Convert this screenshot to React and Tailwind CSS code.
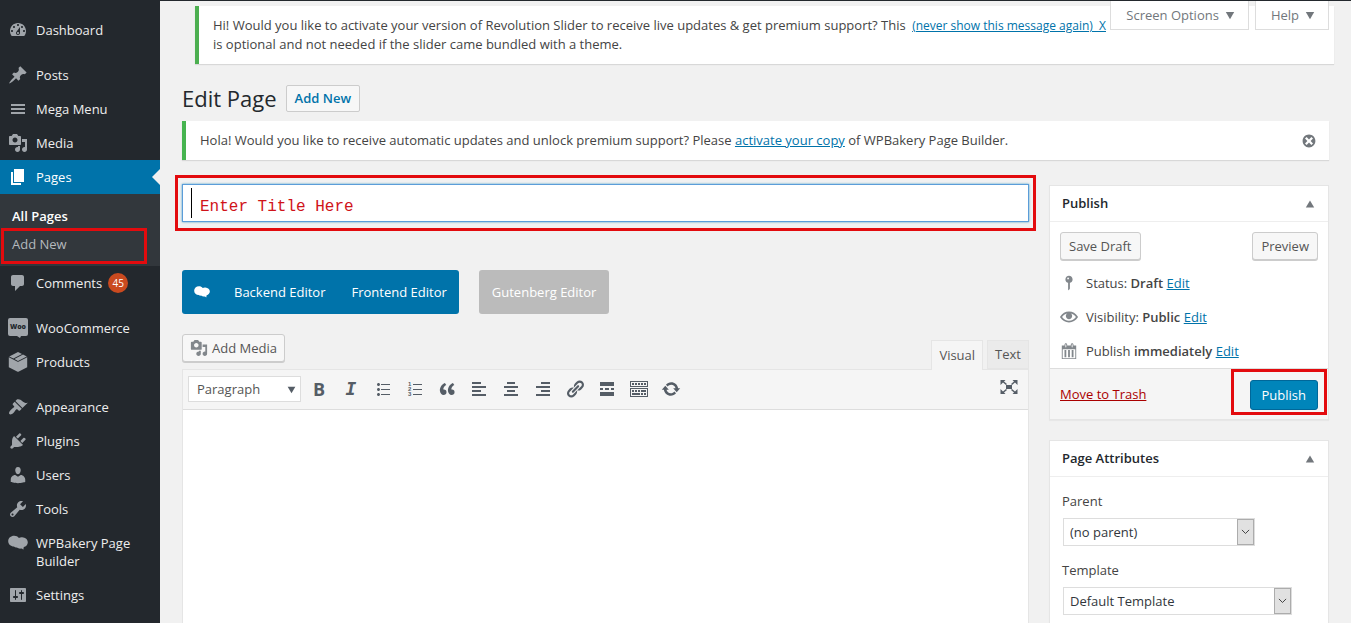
import React, { useState } from 'react';

const ICONS = {
    dashboard: 'M3.76 16h12.48c1.1-1.37 1.76-3.11 1.76-5 0-4.42-3.58-8-8-8s-8 3.58-8 8c0 1.89.66 3.63 1.76 5zM10 4c.55 0 1 .45 1 1s-.45 1-1 1-1-.45-1-1 .45-1 1-1zM6 6c.55 0 1 .45 1 1s-.45 1-1 1-1-.45-1-1 .45-1 1-1zm8 0c.55 0 1 .45 1 1s-.45 1-1 1-1-.45-1-1 .45-1 1-1zm-5.37 5.55L12 7v6c0 1.1-.9 2-2 2s-2-.9-2-2c0-.57.24-1.08.63-1.45zM4 10c.55 0 1 .45 1 1s-.45 1-1 1-1-.45-1-1 .45-1 1-1zm12 0c.55 0 1 .45 1 1s-.45 1-1 1-1-.45-1-1 .45-1 1-1zm-5 3c0-.55-.45-1-1-1s-1 .45-1 1 .45 1 1 1 1-.45 1-1z',
    post: 'M10.44 3.02l1.82-1.82 6.36 6.35-1.83 1.82c-1.05-.68-2.48-.57-3.41.36l-.75.75c-.92.93-1.04 2.35-.35 3.41l-1.83 1.82-2.41-2.41-2.8 2.79c-.42.42-3.38 2.71-3.8 2.29s1.86-3.39 2.28-3.81l2.79-2.79L4.1 9.36l1.83-1.82c1.05.69 2.48.57 3.4-.36l.75-.75c.93-.92 1.05-2.35.36-3.41z',
    menu: 'M17 7V5H3v2h14zm0 4V9H3v2h14zm0 4v-2H3v2h14z',
    media: 'M13 11V4c0-.55-.45-1-1-1h-1.67L9 1H5L3.67 3H2c-.55 0-1 .45-1 1v7c0 .55.45 1 1 1h10c.55 0 1-.45 1-1zM7 4.5c1.38 0 2.5 1.12 2.5 2.5S8.38 9.5 7 9.5 4.5 8.38 4.5 7 5.62 4.5 7 4.5zM14 6h5v10.5c0 1.38-1.12 2.5-2.5 2.5S14 17.88 14 16.5s1.12-2.5 2.5-2.5c.17 0 .34.02.5.05V9h-3V6zm-4 8.05V13h2v3.5c0 1.38-1.12 2.5-2.5 2.5S7 17.88 7 16.5 8.12 14 9.5 14c.17 0 .34.02.5.05z',
    page: 'M6 15V2h10v13H6zm-1 1h8v2H3V5h2v11z',
    comments: 'M5 2h9c1.1 0 2 .9 2 2v7c0 1.1-.9 2-2 2h-2l-5 5v-5H5c-1.1 0-2-.9-2-2V4c0-1.1.9-2 2-2z',
    products: 'M10 0l4 2-8.600 4.400L1.200 4.500zM15 2.500l3.800 2-8.800 4.500-3.600-2zM.8 5.300l8.800 4.500v10L.8 15.200zM19.200 5.300l-8.800 4.500v10l8.800-4.600z M9.600 9.800h.8v10h-.8z',
    appearance: 'M14.48 11.06L7.41 3.99l1.5-1.5c.5-.56 2.3-.47 3.51.32 1.21.8 1.43 1.28 2.91 2.1 1.18.64 2.45 1.26 4.45.85zm-.71.71L6.7 4.7 4.93 6.47c-.39.39-.39 1.02 0 1.41l1.06 1.06c.39.39.39 1.03 0 1.42-.6.6-1.43 1.11-2.21 1.69-.35.26-.7.53-1.01.84C1.43 14.23.4 16.08 1.4 17.07c.99 1 2.84-.03 4.18-1.36.31-.31.58-.66.85-1.02.57-.78 1.08-1.61 1.69-2.21.39-.39 1.02-.39 1.41 0l1.06 1.06c.39.39 1.02.39 1.41 0z',
    plugins: 'M13.11 4.36L9.87 7.6 8 5.73l3.24-3.24c.35-.34 1.05-.2 1.56.32.52.51.66 1.21.31 1.55zm-8 1.77l.91-1.12 9.01 9.01-1.19.84c-.71.71-2.63 1.16-3.82 1.16H6.14L4.9 17.26c-.59.59-1.54.59-2.12 0-.59-.58-.59-1.53 0-2.12l1.24-1.24v-3.88c0-1.13.4-3.19 1.09-3.89zm7.26 3.97l3.24-3.24c.34-.35 1.04-.21 1.55.31.52.51.66 1.21.31 1.55l-3.24 3.25z',
    users: 'M10 9.25c-2.27 0-2.73-3.44-2.73-3.44C7 4.02 7.82 2 9.97 2c2.16 0 2.98 2.02 2.71 3.81 0 0-.41 3.44-2.68 3.44zm0 2.57L12.72 10c2.39 0 4.52 2.33 4.52 4.53v2.49s-3.65 1.13-7.24 1.13c-3.65 0-7.24-1.13-7.24-1.13v-2.49c0-2.25 1.94-4.48 4.47-4.48z',
    tools: 'M16.68 9.77c-1.34 1.34-3.3 1.67-4.95.99l-5.41 6.52c-.99.99-2.59.99-3.58 0s-.99-2.59 0-3.57l6.52-5.42c-.68-1.65-.35-3.61.99-4.95 1.28-1.28 3.12-1.62 4.72-1.06l-2.89 2.89 2.82 2.82 2.86-2.87c.53 1.58.18 3.39-1.08 4.65zM3.81 16.21c.4.39 1.04.39 1.43 0 .4-.4.4-1.04 0-1.43-.39-.4-1.03-.4-1.43 0-.39.39-.39 1.03 0 1.43z',
    bakery: 'M6.2 2.8c2 0 3.6.8 4.7 2.2 1-.6 2-.8 3.2-.7 3.300.2 5.800 2.300 5.700 5.200-.1 2.200-1.700 4-4 4.600l-.5 2.700c-.8-.9-1.500-1.300-2.300-1.200-1.600.2-2.800-.2-4.200-1.100-1 .2-1.900 0-2.800-.9C2.700 13.500.2 11.300.2 8.300c0-3.200 2.600-5.500 6-5.500z',
    settings: 'M18 16V4c0-.55-.45-1-1-1H3c-.55 0-1 .45-1 1v12c0 .55.45 1 1 1h14c.55 0 1-.45 1-1zM8 11h1c.55 0 1 .45 1 1s-.45 1-1 1H8v1.5c0 .28-.22.5-.5.5s-.5-.22-.5-.5V13H6c-.55 0-1-.45-1-1s.45-1 1-1h1V5.500c0-.28.22-.5.5-.5s.5.22.5.5V11zm5-2h-1c-.55 0-1-.45-1-1s.45-1 1-1h1V5.500c0-.28.22-.5.5-.5s.5.22.5.5V7h1c.55 0 1 .45 1 1s-.45 1-1 1h-1v5.500c0 .28-.22.5-.5.5s-.5-.22-.5-.5V9z',
    eye: 'M19.7 9.4C17.7 6 14 3.9 10 3.9S2.3 6 .3 9.4L0 10l.3.6c2 3.4 5.7 5.5 9.7 5.5s7.7-2.1 9.7-5.5l.3-.6-.3-.6zM10 14.1c-3.1 0-6-1.6-7.7-4.1C3.6 8 5.7 6.6 8 6.1c-.9.6-1.5 1.7-1.5 2.9 0 1.9 1.6 3.5 3.5 3.5s3.5-1.6 3.5-3.5c0-1.2-.6-2.3-1.5-2.9 2.3.5 4.4 1.9 5.7 3.9-1.7 2.5-4.6 4.1-7.7 4.1z',
    calendar: 'M15 4h3v15H2V4h3V3c0-.41.15-.76.44-1.06.29-.29.65-.44 1.06-.44s.77.15 1.06.44c.29.3.44.65.44 1.06v1h4V3c0-.41.15-.76.44-1.06.29-.29.65-.44 1.06-.44s.77.15 1.06.44c.29.3.44.65.44 1.06v1zM6 3v2.500c0 .14.05.26.15.36.09.09.21.14.35.14s.26-.05.35-.14c.1-.1.15-.22.15-.36V3c0-.14-.05-.26-.15-.35-.09-.1-.21-.15-.35-.15s-.26.05-.35.15c-.1.09-.15.21-.15.35zm7 0v2.500c0 .14.05.26.15.36.09.09.21.14.35.14s.26-.05.35-.14c.1-.1.15-.22.15-.36V3c0-.14-.05-.26-.15-.35-.09-.1-.21-.15-.35-.15s-.26.05-.35.15c-.1.09-.15.21-.15.35zm4 15V8H3v10h14zM7 9v8H5V9h2zm4 0v8H9V9h2zm4 0v8h-2V9h2z',
    pin: 'M14 6c0 1.86-1.28 3.41-3 3.86V16c0 1-2 2-2 2V9.86c-1.72-.45-3-2-3-3.86 0-2.21 1.79-4 4-4s4 1.79 4 4zM8 5c0 .55.45 1 1 1s1-.45 1-1-.45-1-1-1-1 .45-1 1z',
    ul: 'M5.5 7C4.67 7 4 6.33 4 5.5 4 4.68 4.67 4 5.5 4 6.32 4 7 4.68 7 5.5 7 6.33 6.32 7 5.5 7zM8 5h9v1H8V5zm-2.5 7c-.83 0-1.5-.67-1.5-1.5C4 9.68 4.67 9 5.5 9c.82 0 1.5.68 1.5 1.5 0 .83-.68 1.5-1.5 1.5zM8 10h9v1H8v-1zm-2.5 7c-.83 0-1.5-.67-1.5-1.5 0-.82.67-1.5 1.5-1.5.82 0 1.5.68 1.5 1.5 0 .83-.68 1.5-1.5 1.500zM8 15h9v1H8v-1z',
    quote: 'M9.49 13.22c0-.74-.2-1.38-.61-1.9-.62-.78-1.83-.88-2.53-.72-.29-1.65 1.11-3.75 2.92-4.65L7.88 4c-2.73 1.3-5.42 4.28-4.96 8.05C3.21 14.43 4.59 16 6.54 16c.85 0 1.56-.25 2.12-.75s.83-1.18.83-2.03zm8.05 0c0-.74-.2-1.38-.61-1.9-.63-.78-1.83-.88-2.53-.72-.29-1.65 1.11-3.75 2.92-4.65L15.93 4c-2.73 1.3-5.41 4.28-4.95 8.05.29 2.38 1.66 3.95 3.61 3.95.85 0 1.56-.25 2.12-.75s.83-1.18.83-2.03z',
    alignLeft: 'M12 5V3H3v2h9zm5 4V7H3v2h14zm-5 4v-2H3v2h9zm5 4v-2H3v2h14z',
    alignCenter: 'M14 5V3H6v2h8zm3 4V7H3v2h14zm-3 4v-2H6v2h8zm3 4v-2H3v2h14z',
    alignRight: 'M17 5V3H8v2h9zm0 4V7H3v2h14zm0 4v-2H8v2h9zm0 4v-2H3v2h14z',
    link: 'M17.74 2.76c1.68 1.69 1.68 4.41 0 6.1l-1.53 1.52c-1.12 1.12-2.7 1.47-4.14 1.09l2.62-2.61.76-.77.76-.76c.84-.84.84-2.2 0-3.04-.84-.85-2.2-.85-3.04 0l-.77.76-3.38 3.38c-.37-1.44-.02-3.02 1.1-4.14l1.52-1.53c1.69-1.68 4.42-1.68 6.1 0zM8.59 13.43l5.34-5.34c.42-.42.42-1.1 0-1.52-.44-.43-1.13-.39-1.53 0l-5.33 5.34c-.42.42-.42 1.1 0 1.52.44.43 1.13.39 1.52 0zm-.76 2.29l4.14-4.15c.38 1.44.03 3.02-1.09 4.14l-1.52 1.53c-1.69 1.68-4.41 1.68-6.1 0-1.68-1.68-1.68-4.42 0-6.1l1.53-1.52c1.12-1.12 2.7-1.47 4.14-1.1l-4.14 4.15c-.85.84-.85 2.2 0 3.05.84.84 2.2.84 3.04 0z',
    more: 'M17 7V3H3v4h14zM6 11V9H3v2h3zm6 0V9H8v2h4zm5 0V9h-3v2h3zm0 6v-4H3v4h14z',
    toolbar: 'M19 2v6H1V2h18zm-1 5V3H2v4h16zM5 4v2H3V4h2zm3 0v2H6V4h2zm3 0v2H9V4h2zm3 0v2h-2V4h2zm3 0v2h-2V4h2zm2 5v9H1V9h18zm-1 8v-7H2v7h16zM5 11v2H3v-2h2zm3 0v2H6v-2h2zm3 0v2H9v-2h2zm6 0v2h-5v-2h5zm-6 3v2H3v-2h8zm3 0v2h-2v-2h2zm3 0v2h-2v-2h2z',
    update: 'M10.2 3.28c3.53 0 6.43 2.61 6.92 6h2.08l-3.5 4-3.5-4h2.32c-.45-1.97-2.21-3.45-4.32-3.45-1.45 0-2.73.71-3.54 1.78L4.95 5.66C6.23 4.2 8.11 3.28 10.2 3.28zm-.4 13.44c-3.52 0-6.43-2.61-6.92-6H.8l3.5-4c1.17 1.33 2.33 2.67 3.5 4H5.48c.45 1.97 2.21 3.45 4.32 3.45 1.45 0 2.73-.71 3.54-1.78l1.71 1.95c-1.28 1.46-3.15 2.38-5.25 2.38z',
    fullscreen: 'M7 8h6v4H7zM1.500 3h5L5 4.500l3 2.500-1 1-3-2.500L1.500 8zM18.500 3h-5L15 4.500 12 7l1 1 3-2.500L18.500 8zM1.500 17h5L5 15.500 8 13l-1-1-3 2.500L1.500 12zM18.500 17h-5l1.500-1.500-3-2.500 1-1 3 2.500 2.500-2.500z',
    dismiss: 'M10 2c4.42 0 8 3.58 8 8s-3.58 8-8 8-8-3.58-8-8 3.58-8 8-8zm5 11l-3-3 3-3-2-2-3 3-3-3-2 2 3 3-3 3 2 2 3-3 3 3z',
    down: 'M3 5h14l-7 12z',
    up: 'M3 16h14L10 4z',
};

function Icon({ name, className = 'size-5' }) {
    return (
        <svg viewBox="0 0 20 20" fill="currentColor" fillRule="evenodd" aria-hidden="true" className={`shrink-0 ${className}`}>
            <path d={ICONS[name]} />
        </svg>
    );
}

function WooIcon() {
    return (
        <svg viewBox="0 0 20 20" aria-hidden="true" className="size-5 shrink-0">
            <path fill="currentColor" d="M2 0h16a2 2 0 0 1 2 2v14a2 2 0 0 1-2 2h-5l-1 2-3-2H2a2 2 0 0 1-2-2V2a2 2 0 0 1 2-2z" />
            <text x="10" y="11" textAnchor="middle" fontSize="7" fontWeight="800" fontFamily="Open Sans, sans-serif" fill="#23282d">Woo</text>
        </svg>
    );
}

function OrderedIcon() {
    return (
        <svg viewBox="0 0 20 20" fill="currentColor" aria-hidden="true" className="size-5 shrink-0">
            <path d="M8 5h9v1H8zM8 10h9v1H8zM8 15h9v1H8z" />
            <g fontSize="6" fontWeight="700" fontFamily="Liberation Sans, sans-serif">
                <text x="3" y="7">1</text>
                <text x="3" y="12">2</text>
                <text x="3" y="17">3</text>
            </g>
        </svg>
    );
}

const MENU = [
    [{ label: 'Dashboard', icon: 'dashboard' }],
    [
        { label: 'Posts', icon: 'post' },
        { label: 'Mega Menu', icon: 'menu' },
        { label: 'Media', icon: 'media' },
        { label: 'Pages', icon: 'page', current: true },
        { label: 'Comments', icon: 'comments', count: 45 },
    ],
    [
        { label: 'WooCommerce', icon: 'woo' },
        { label: 'Products', icon: 'products' },
    ],
    [
        { label: 'Appearance', icon: 'appearance' },
        { label: 'Plugins', icon: 'plugins' },
        { label: 'Users', icon: 'users' },
        { label: 'Tools', icon: 'tools' },
        { label: 'WPBakery Page Builder', icon: 'bakery' },
        { label: 'Settings', icon: 'settings' },
    ],
];

function MenuItem({ item }) {
    return (
        <li>
            <a
                href="#"
                className={`relative flex gap-2 px-2 py-2 leading-[18px] ${item.current ? 'bg-[#0073aa] text-white' : 'text-[#eee]'}`}
            >
                <span className={`-my-px ${item.current ? 'text-white' : 'text-[#a0a5aa]'}`}>
                    {item.icon === 'woo' ? <WooIcon /> : <Icon name={item.icon} />}
                </span>
                <span>{item.label}</span>
                {item.count && (
                    <span className="-my-px -ml-0.5 size-5 rounded-full bg-[#ca4a1f] text-center text-[10px] leading-5 text-white">
                        {item.count}
                    </span>
                )}
                {item.current && (
                    <span className="absolute top-1/2 right-0 -translate-y-1/2 border-8 border-transparent border-r-[#f1f1f1]" />
                )}
            </a>
            {item.current && (
                <ul className="bg-[#32373c] pt-2 pb-0.5 leading-[18px]">
                    <li><a href="#" className="block px-3 pt-[5px] pb-[3px] font-semibold text-white">All Pages</a></li>
                    <li className="mr-[13px] ml-px border-3 border-[#e30b0e]">
                        <a href="#" className="block px-2 pt-1 pb-2 text-[#b4b9be]">Add New</a>
                    </li>
                </ul>
            )}
        </li>
    );
}

function Sidebar() {
    return (
        <nav aria-label="Main menu" className="flex w-40 shrink-0 flex-col gap-[11px] bg-[#23282d] pt-3">
            {MENU.map((group, i) => (
                <ul key={i}>
                    {group.map((item) => <MenuItem key={item.label} item={item} />)}
                </ul>
            ))}
        </nav>
    );
}

function Button({ children, className = '' }) {
    return (
        <button
            type="button"
            className={`flex h-7 items-center justify-center rounded-[3px] border border-[#ccc] bg-[#f7f7f7] text-[#555] shadow-[0_1px_0_#ccc] ${className}`}
        >
            {children}
        </button>
    );
}

function Link({ children, className = 'text-[#0073aa]' }) {
    return <a href="#" className={`underline ${className}`}>{children}</a>;
}

const TOOLS = [
    ['Bulleted list', 'ul'],
    ['Numbered list', 'ol'],
    ['Blockquote', 'quote'],
    ['Align left', 'alignLeft'],
    ['Align center', 'alignCenter'],
    ['Align right', 'alignRight'],
    ['Insert link', 'link'],
    ['Insert Read More tag', 'more'],
    ['Toolbar Toggle', 'toolbar'],
    ['Refresh', 'update'],
];

function Editor() {
    const [content, setContent] = useState('');
    return (
        <section className="mt-5 flex flex-1 flex-col">
            <div className="flex items-start justify-between">
                <Button className="gap-1 px-[7px]">
                    <Icon name="media" className="size-[18px] text-[#82878c]" />
                    Add Media
                </Button>
                <div className="z-10 mt-1.5 -mb-px flex items-stretch gap-1 text-[#555]">
                    <button type="button" className="h-[30px] border border-b-0 border-[#e5e5e5] bg-[#f5f5f5] px-[7px]">Visual</button>
                    <button type="button" className="h-[29px] border border-[#e5e5e5] bg-[#ebebeb] px-[7px]">Text</button>
                </div>
            </div>
            <div className="flex flex-1 flex-col border border-[#e5e5e5]">
                <div className="flex h-10 items-center border-b border-[#ddd] bg-[#f5f5f5] px-[5px] pb-px text-[#555d66]">
                    <div className="relative mr-2">
                        <select aria-label="Paragraph format" className="block h-[26px] w-[113px] appearance-none border border-[#ddd] bg-white px-2 text-[#555]">
                            <option>Paragraph</option>
                            <option>Heading 1</option>
                        </select>
                        <Icon name="down" className="pointer-events-none absolute top-2 right-1 size-[11px]" />
                    </div>
                    <div className="flex gap-3">
                        <button type="button" aria-label="Bold" className="size-5 text-center text-lg leading-5 font-bold">B</button>
                        <button type="button" aria-label="Italic" className="size-5 text-center font-['DejaVu_Sans_Mono'] text-lg leading-5 font-bold italic">I</button>
                        {TOOLS.map(([label, icon]) => (
                            <button key={icon} type="button" aria-label={label}>
                                {icon === 'ol' ? <OrderedIcon /> : <Icon name={icon} />}
                            </button>
                        ))}
                    </div>
                    <button type="button" aria-label="Distraction-free writing mode" className="mr-1 mb-1 ml-auto">
                        <Icon name="fullscreen" />
                    </button>
                </div>
                <textarea
                    aria-label="Page content"
                    value={content}
                    onChange={(evt) => setContent(evt.target.value)}
                    className="block min-h-[213px] w-full flex-1 resize-none bg-white p-2 outline-none"
                />
            </div>
        </section>
    );
}

function Box({ title, children }) {
    return (
        <section className="border border-[#e5e5e5] bg-white shadow-[0_1px_1px_rgba(0,0,0,0.04)]">
            <h2 className="flex h-9 items-center justify-between border-b border-[#eee] px-3 font-semibold text-[#23282d]">
                {title}
                <button type="button" aria-label={`Toggle ${title}`} className="text-[#72777c]">
                    <Icon name="up" className="size-3" />
                </button>
            </h2>
            {children}
        </section>
    );
}

function PublishRow({ icon, label, value }) {
    return (
        <p className="flex h-[34px] items-center gap-2">
            <Icon name={icon} className="size-[18px] text-[#82878c]" />
            <span>{label} <b className="font-semibold">{value}</b> <Link>Edit</Link></span>
        </p>
    );
}

function SelectField({ id, label, options, width }) {
    return (
        <div>
            <label htmlFor={id} className="block font-medium leading-[18px]">{label}</label>
            <div className={`relative mt-2 ml-px h-7 ${width}`}>
                <select id={id} className="h-7 w-full appearance-none border border-[#ddd] bg-white pr-5 pl-1.5 text-[#32373c]">
                    {options.map((option) => <option key={option}>{option}</option>)}
                </select>
                <span className="pointer-events-none absolute inset-y-px right-px flex w-[17px] items-center justify-center border border-[#acacac] bg-[#e1e1e1]">
                    <svg viewBox="0 0 10 6" aria-hidden="true" className="w-[9px] fill-none stroke-[#333]"><path d="M1 1l4 4 4-4" /></svg>
                </span>
            </div>
        </div>
    );
}

export default function App() {
    const [title, setTitle] = useState('');
    return (
        <div className="flex min-h-screen overflow-hidden border-t border-[#23282d] bg-[#f1f1f1] font-['Open_Sans',sans-serif] text-[13px] leading-[19px] text-[#444]">
            <Sidebar />
            <main className="relative flex min-w-0 flex-1 flex-col px-[22px]">
                <div className="absolute top-0 right-[22px] flex gap-1.5 text-[#72777c]">
                    <button type="button" className="flex h-[29px] items-center gap-[5px] border border-t-0 border-[#ddd] bg-white pr-3 pl-[15px]">
                        Screen Options <Icon name="down" className="size-3" />
                    </button>
                    <button type="button" className="flex h-[29px] items-center gap-[5px] border border-t-0 border-[#ddd] bg-white pr-3 pl-[15px]">
                        Help <Icon name="down" className="size-3" />
                    </button>
                </div>

                <div className="mt-[5px] mr-[-5px] ml-[13px] flex gap-1 border-l-4 border-[#4caf50] bg-white py-2.5 pr-[228px] pl-3.5 shadow-[0_1px_1px_rgba(0,0,0,0.1)]">
                    <p className="flex-1">
                        Hi! Would you like to activate your version of Revolution Slider to receive live updates &amp; get premium support? This is optional and not needed if the slider came bundled with a theme.
                    </p>
                    <a href="#" className="text-xs leading-[19px] whitespace-pre text-[#0073aa] underline">(never show this message again)  X</a>
                </div>

                <div className="mt-5 flex items-center gap-[9px]">
                    <h1 className="text-[22px] leading-[29px] text-[#23282d]">Edit Page</h1>
                    <button type="button" className="h-[27px] rounded-xs border border-[#ccc] bg-[#f7f7f7] px-2 font-semibold text-[#0073aa]">Add New</button>
                </div>

                <div className="mt-2 flex h-[39px] items-center justify-between border-l-4 border-[#46b450] bg-white pr-3 pl-3.5 shadow-[0_1px_1px_rgba(0,0,0,0.1)]">
                    <p>Hola! Would you like to receive automatic updates and unlock premium support? Please <Link>activate your copy</Link> of WPBakery Page Builder.</p>
                    <button type="button" aria-label="Dismiss this notice" className="text-[#72777c]">
                        <Icon name="dismiss" className="size-4" />
                    </button>
                </div>

                <div className="mt-[15px] flex flex-1 items-stretch gap-[13px]">
                    <div className="-ml-[7px] flex min-w-0 flex-1 flex-col">
                        <div className="border-3 border-[#e30b0e] px-1 py-1.5">
                            <div className="flex h-[38px] items-center gap-2 border border-[#5b9dd9] bg-white pl-2 shadow-[0_0_2px_rgba(30,140,190,0.8)]">
                                <span className="h-[30px] w-px bg-black" />
                                <input
                                    type="text"
                                    aria-label="Title"
                                    value={title}
                                    onChange={(evt) => setTitle(evt.target.value)}
                                    placeholder="Enter Title Here"
                                    className="mt-2 w-full font-['Liberation_Mono',monospace] text-base text-[#d0131a] outline-none placeholder:text-[#d0131a]"
                                />
                            </div>
                        </div>
                        <div className="mx-[7px] flex flex-1 flex-col">
                            <div className="mt-[39px] flex gap-5">
                                <div className="flex h-11 items-center rounded-[3px] bg-[#0073aa] px-3 text-white">
                                    <Icon name="bakery" className="mr-6 size-4" />
                                    <button type="button" className="mr-[26px]">Backend Editor</button>
                                    <button type="button">Frontend Editor</button>
                                </div>
                                <button type="button" className="h-11 rounded-[3px] bg-[#bbb] px-[13px] text-white">Gutenberg Editor</button>
                            </div>
                            <Editor />
                        </div>
                    </div>

                    <aside className="mt-2.5 flex w-[280px] shrink-0 flex-col gap-5">
                        <Box title="Publish">
                            <div className="px-2.5 pt-2.5">
                                <div className="mb-1.5 flex justify-between">
                                    <Button className="px-2">Save Draft</Button>
                                    <Button className="px-2">Preview</Button>
                                </div>
                                <PublishRow icon="pin" label="Status:" value="Draft" />
                                <PublishRow icon="eye" label="Visibility:" value="Public" />
                                <PublishRow icon="calendar" label="Publish" value="immediately" />
                            </div>
                            <div className="flex items-start justify-between border-t border-[#ddd] bg-[#f5f5f5] pr-px pb-1 pl-2.5">
                                <span className="pt-4"><Link className="text-[#a00]">Move to Trash</Link></span>
                                <div className="border-3 border-[#e30b0e] pt-2 pr-1.5 pb-0.5 pl-4">
                                    <button type="button" className="block h-[30px] rounded-[3px] border border-[#006799] bg-[#0085ba] px-[11px] text-white">Publish</button>
                                </div>
                            </div>
                        </Box>
                        <Box title="Page Attributes">
                            <div className="flex flex-col gap-[15px] px-3 pt-[15px] pb-4">
                                <SelectField id="parent" label="Parent" options={['(no parent)']} width="w-48" />
                                <SelectField id="template" label="Template" options={['Default Template', 'Full Width']} width="w-[229px]" />
                            </div>
                        </Box>
                    </aside>
                </div>
            </main>
        </div>
    );
}
